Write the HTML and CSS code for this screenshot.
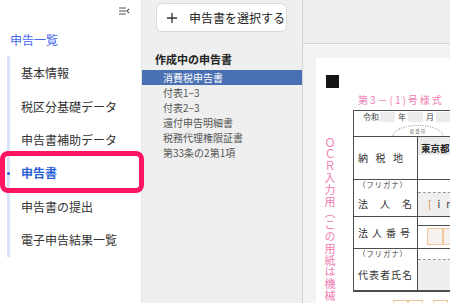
FILE: index.html
```html
<!DOCTYPE html>
<html lang="ja">
<head>
<meta charset="utf-8">
<title>申告書</title>
<link rel="stylesheet" href="styles.css">
</head>
<body>
<div class="app">
  <aside class="sidebar">
    <div class="sb-top">
      <svg class="collapse" width="11" height="8" viewBox="0 0 11 8"><path d="M0 1H7M0 4H7M0 7H7M10 1.8L8 4L10 6.2" fill="none" stroke="#555" stroke-width="1.2"/></svg>
    </div>
    <div class="sb-title">申告一覧</div>
    <ul class="sb-list">
      <li class="sb-item">基本情報</li>
      <li class="sb-item">税区分基礎データ</li>
      <li class="sb-item">申告書補助データ</li>
      <li class="sb-item active">申告書<span class="highlight"></span></li>
      <li class="sb-item">申告書の提出</li>
      <li class="sb-item">電子申告結果一覧</li>
    </ul>
  </aside>

  <section class="middle">
    <button class="select-btn" type="button">
      <svg width="10" height="10" viewBox="0 0 10 10"><path d="M5 0V10M0 5H10" stroke="#333" stroke-width="1.3"/></svg>
      <span>申告書を選択する</span>
    </button>
    <h3 class="wip-title">作成中の申告書</h3>
    <ul class="wip-list">
      <li class="wip-item active">消費税申告書</li>
      <li class="wip-item">付表1−3</li>
      <li class="wip-item">付表2−3</li>
      <li class="wip-item">還付申告明細書</li>
      <li class="wip-item">税務代理権限証書</li>
      <li class="wip-item">第33条の2第1項</li>
    </ul>
  </section>

  <main class="viewer">
    <div class="toolbar"></div>
    <div class="canvas">
      <div class="page">
        <div class="page-side">
          <div class="mark"></div>
          <div class="ocr">ＯＣＲ入力用（この用紙は機械で</div>
        </div>
        <div class="page-main">
          <div class="form-no">第3－(1)号様式</div>
          <div class="form">
            <div class="row-date">
              <div class="date">
                <span>令和</span><span class="blank b1"></span>
                <span class="du">年</span><span class="blank b2"></span>
                <span class="du">月</span><span class="blank b3"></span>
                <span>日</span>
              </div>
              <svg class="stamp" width="52" height="12" viewBox="0 0 52 12">
                <path d="M1 12A25 10.5 0 0 1 51 12" fill="none" stroke="#666" stroke-width="0.8" stroke-dasharray="1 1.4"/>
                <text x="26" y="9" text-anchor="middle" font-size="4.5" fill="#666" letter-spacing="1.2">収受印</text>
              </svg>
            </div>
            <div class="row r-addr">
              <div class="lc"><div class="lbl w45"><span>納</span><span>税</span><span>地</span></div></div>
              <div class="rc"><div class="addr">東京都</div></div>
            </div>
            <div class="row r-name">
              <div class="lc">
                <div class="kana">（フリガナ）</div>
                <div class="lbl w54 mt9"><span>法</span><span>人</span><span>名</span></div>
              </div>
              <div class="rc">
                <div class="kana-line"></div>
                <div class="name-in"><span class="br">[</span>in</div>
              </div>
            </div>
            <div class="row r-num">
              <div class="lc"><div class="lbl w52"><span>法</span><span>人</span><span>番</span><span>号</span></div></div>
              <div class="rc">
                <div class="num-top"></div>
                <div class="boxes"><span></span><span></span><span></span></div>
              </div>
            </div>
            <div class="row r-rep">
              <div class="lc">
                <div class="kana">（フリガナ）</div>
                <div class="lbl w54 mt11"><span>代</span><span>表</span><span>者</span><span>氏</span><span>名</span></div>
              </div>
              <div class="rc">
                <div class="kana-line short"></div>
                <div class="rep-in"></div>
              </div>
            </div>
          </div>
          <div class="below"><span></span><span></span><span class="gap"></span><span></span></div>
        </div>
      </div>
    </div>
  </main>
</div>
</body>
</html>
```

FILE: styles.css
```css
html, body {
  margin: 0;
  padding: 0;
}
body {
  width: 450px;
  height: 303px;
  overflow: hidden;
  font-family: "Noto Sans CJK JP", "Noto Sans", sans-serif;
  color: #333;
}
ul { list-style: none; margin: 0; padding: 0; }

.app {
  display: flex;
  height: 303px;
}

/* Sidebar */
.sidebar {
  width: 141px;
  flex: none;
  background: #fff;
  border-right: 1px solid #e3e3e3;
  position: relative;
}
.sb-top {
  height: 22px;
  box-sizing: border-box;
  padding: 7px 11px 0 0;
  display: flex;
  justify-content: flex-end;
}
.collapse { display: block; }
.sb-title {
  margin-top: 9.5px;
  padding-left: 10px;
  font-size: 12px;
  line-height: 16px;
  color: #4467ef;
}
.sb-list {
  margin: 8.8px 0 0 7px;
  border-left: 3px solid #d9e3f8;
}
.sb-item {
  position: relative;
  height: 33.4px;
  line-height: 33.4px;
  padding-left: 11px;
  font-size: 12px;
  color: #333;
}
.sb-item.active {
  color: #2b5fd6;
  font-weight: bold;
}
.sb-item.active::before {
  content: "";
  position: absolute;
  left: -3px;
  top: 15.5px;
  width: 3px;
  height: 3px;
  border-radius: 50%;
  background: #2b5fd6;
}
.highlight {
  position: absolute;
  left: -10px;
  top: -5px;
  width: 144px;
  height: 42px;
  box-sizing: border-box;
  border: 5px solid #fe1562;
  border-radius: 8px;
  z-index: 2;
}

/* Middle panel */
.middle {
  width: 160px;
  flex: none;
  background: #efefef;
}
.select-btn {
  display: flex;
  align-items: center;
  gap: 12px;
  margin: 3px 0 0 14px;
  width: 131px;
  height: 29px;
  box-sizing: border-box;
  padding: 0 0 0 10px;
  border: 1px solid #dadada;
  border-radius: 6px;
  background: #fff;
  font-family: inherit;
  font-size: 12px;
  color: #222;
  white-space: nowrap;
}
.select-btn svg { flex: none; display: block; }
.wip-title {
  margin: 19.7px 0 3px 13px;
  font-size: 11px;
  line-height: 15px;
  font-weight: bold;
  color: #222;
}
.wip-item {
  height: 15px;
  line-height: 15px;
  padding-left: 21px;
  font-size: 10px;
  color: #555;
  white-space: nowrap;
}
.wip-item.active {
  background: #4a70b4;
  color: #fff;
}

/* Viewer */
.viewer {
  flex: 1;
  min-width: 0;
  border-left: 1px solid #d3d3d3;
  display: flex;
  flex-direction: column;
  background: #f4f2f2;
}
.toolbar {
  height: 43px;
  flex: none;
  background: #eeeeee;
  border-bottom: 1px solid #d3d3d3;
}
.canvas {
  flex: 1;
  overflow: hidden;
  padding: 14px 0 0 13px;
}
.page {
  width: 320px;
  height: 300px;
  background: #fff;
  display: flex;
  box-sizing: border-box;
  padding: 17px 0 0 10px;
}
.page-side {
  width: 27px;
  flex: none;
  display: flex;
  flex-direction: column;
  align-items: flex-start;
}
.mark {
  flex: none;
  width: 13px;
  height: 13px;
  background: #151515;
}
.ocr {
  flex: none;
  margin: 49px 0 0 -3px;
  writing-mode: vertical-rl;
  font-size: 11px;
  line-height: 14px;
  letter-spacing: 0.8px;
  color: #f07cb2;
  white-space: nowrap;
}
.page-main {
  flex: 1;
  padding-top: 17.5px;
}
.form-no {
  padding-left: 5px;
  font-size: 10px;
  line-height: 14px;
  letter-spacing: 2px;
  color: #f07cb2;
  margin-bottom: 3.5px;
  white-space: nowrap;
}
.form {
  border: 1px solid #4d4d4d;
  width: 250px;
  font-size: 10px;
  color: #333;
}
.row-date {
  height: 25px;
  border-bottom: 1px solid #4d4d4d;
  display: flex;
  flex-direction: column;
}
.date {
  display: flex;
  align-items: center;
  height: 10px;
  margin-top: 1px;
  padding-left: 9px;
  font-size: 8px;
  line-height: 10px;
  color: #444;
}
.blank { height: 10px; background: #ebebeb; }
.b1 { width: 15px; margin-left: 1px; }
.b2 { width: 15px; }
.b3 { width: 16px; margin-left: 0; }
.du { margin: 0 2px 0 3px; }
.stamp {
  display: block;
  margin: auto 0 0 38px;
}
.row {
  display: grid;
  grid-template-columns: 64px 1fr;
  border-bottom: 1px solid #4d4d4d;
}
.lc {
  box-sizing: border-box;
  border-right: 1px solid #4d4d4d;
  padding-left: 4px;
}
.r-addr { height: 43px; box-sizing: border-box; }
.r-addr .lc { display: flex; align-items: center; }
.lbl {
  display: flex;
  justify-content: space-between;
  line-height: 12px;
  font-size: 10px;
  color: #333;
}
.w45 { width: 45px; }
.w52 { width: 52px; }
.w54 { width: 54px; }
.mt9 { margin-top: 9px; }
.mt11 { margin-top: 11px; }
.addr {
  height: 18px;
  box-sizing: border-box;
  padding: 5px 0 0 3px;
  line-height: 12px;
  background: #ebebeb;
  font-size: 9.5px;
  font-weight: bold;
  color: #222;
  white-space: nowrap;
}
.r-name { height: 37px; box-sizing: border-box; }
.kana {
  font-size: 7.5px;
  line-height: 9px;
  letter-spacing: 0.8px;
  color: #444;
  white-space: nowrap;
}
.kana-line {
  height: 12px;
  border-bottom: 1px dashed #999;
}
.kana-line.short { height: 10px; }
.name-in {
  height: 23px;
  background: #efefef;
  padding-left: 10px;
  font-size: 10px;
  line-height: 22px;
  letter-spacing: 6px;
  color: #333;
}
.br { color: #e08a30; }
.r-num { height: 32px; box-sizing: border-box; }
.r-num .lc { display: flex; align-items: center; }
.num-top {
  height: 8px;
  border-bottom: 1px solid #4d4d4d;
}
.boxes {
  display: flex;
  padding: 2px 0 0 9px;
}
.boxes span {
  width: 16px;
  height: 17px;
  box-sizing: border-box;
  border: 1px solid #f0c69a;
  background: #f4f1ee;
}
.r-rep { height: 42px; box-sizing: border-box; }
.rep-in { height: 30px; background: #efefef; }
.below {
  display: flex;
  margin: 8px 0 0 40px;
}
.below span {
  width: 15px;
  height: 10px;
  box-sizing: border-box;
  border: 1px solid #f0c69a;
}
.below .gap { border: 0; width: 10px; }
```
